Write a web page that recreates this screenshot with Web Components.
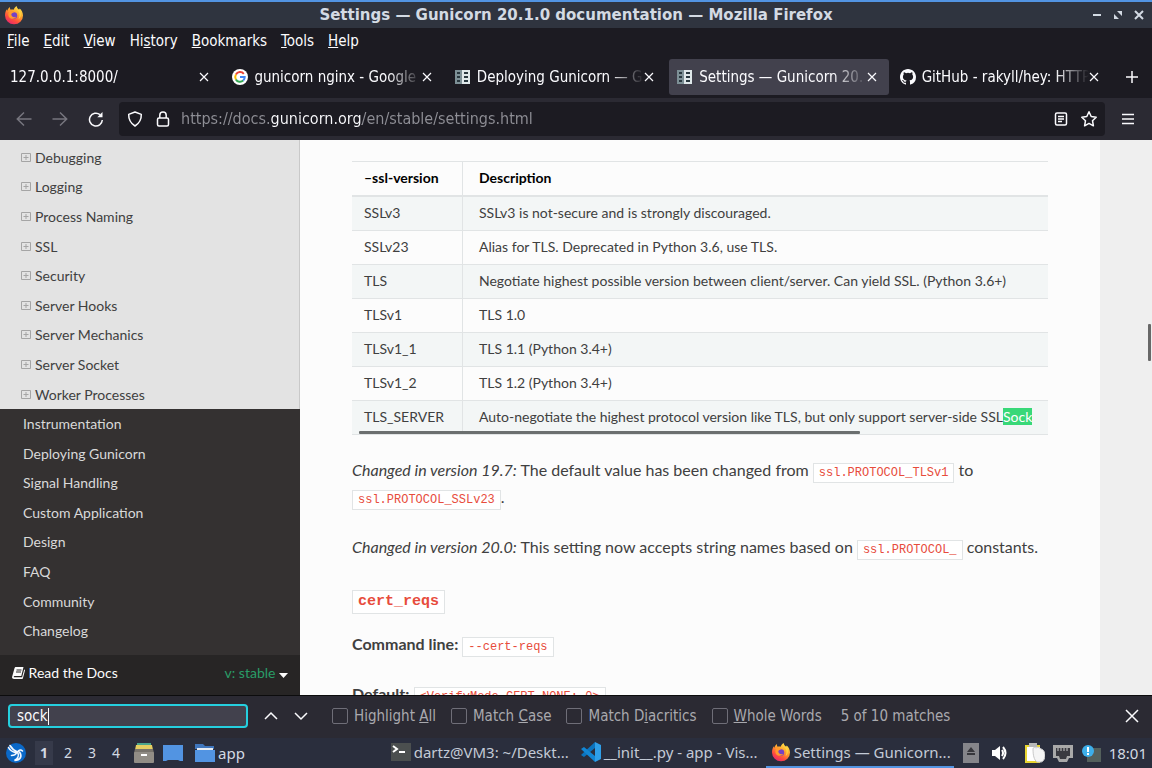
<!DOCTYPE html>
<html lang="en">

<head>
  <meta charset="UTF-8">
  <meta name="viewport" content="width=device-width, initial-scale=1.0">
  <title>Settings — Gunicorn 20.1.0 documentation</title>
  <style>
    html, body {
      height: 100%;
      margin: 0;
    }
    body {
      display: flex;
      flex-direction: column;
      overflow: hidden;
      background: #1c1b22;
      font: 15px/18px "DejaVu Sans Condensed", "DejaVu Sans", sans-serif;
    }
    main {
      flex: 1;
      min-height: 0;
      display: flex;
      background: #efefef;
    }
  </style>
</head>

<body>
  <template id="title-bar">
    <style>
      :host {
        display: flex;
        align-items: center;
        height: 26px;
        padding: 0 3px 0 4px;
        border-top: 2px solid #5294e2;
        background: #2f343f;
        color: #d3dae3;
      }
      h1 {
        flex: 1;
        margin: 0;
        padding-left: 42px;
        text-align: center;
        font: bold 15px/18px "DejaVu Sans", sans-serif;
      }
      button {
        width: 21px;
        height: 20px;
        padding: 0;
        border: 0;
        background: none;
        color: inherit;
      }
      svg { display: block; margin: auto; }
    </style>
    <fire-fox></fire-fox>
    <h1><slot></slot></h1>
    <button aria-label="Minimise"><svg width="10" height="10"><path d="M1 5h8" stroke="currentColor" stroke-width="2"/></svg></button>
    <button aria-label="Restore"><svg width="10" height="10"><path d="M4 1h5v5zM1 4v5h5z" fill="currentColor"/></svg></button>
    <button aria-label="Close"><svg width="10" height="10"><path d="M1 1l8 8M9 1l-8 8" stroke="currentColor" stroke-width="2"/></svg></button>
  </template>

  <template id="fire-fox">
    <style>
      :host { display: block; width: 20px; height: 20px; flex: none; }
      svg { display: block; }
    </style>
    <svg width="20" height="20" viewBox="0 0 20 20">
      <defs>
        <linearGradient id="f" x1="0.8" y1="0" x2="0.2" y2="1">
          <stop offset="0" stop-color="#fff04e"/>
          <stop offset="0.4" stop-color="#ffa02c"/>
          <stop offset="0.7" stop-color="#ff4f3c"/>
          <stop offset="1" stop-color="#e32176"/>
        </linearGradient>
      </defs>
      <path d="M12.6 1c.3 2 1.400 2.600 2.400 3.600.5-.2.6-.6.6-1.200 2 1.500 3.400 4.200 3.400 7A9 8.800 0 0 1 1 10.600C1 8 1.700 5.700 2.800 4.200c0 .8.200 1.200.5 1.600C3.800 4 4.800 2.700 6 2c-.2 1 0 2 .6 2.700 1-.4 2.200-.4 3 0C10.400 3 11.200 1.700 12.600 1z" fill="url(#f)"/>
      <circle cx="10" cy="10.500" r="3.200" fill="#7542c5"/>
      <path d="M3.500 6c2-1.200 4.500-.8 6.800.8-1 1.600-3 1-3 2.700 0 2.200 2.700 3.200 5 2.300-1.500 2.700-6.200 2.600-7.600-.4C4 9.500 4.400 7.800 5.200 7z" fill="#ff9a2e"/>
      <path d="M12.500 4.500c3 2 4.200 5.500 2 9.500 2.500-1.500 3.500-5.500 1-8.800z" fill="#ffd53f"/>
    </svg>
  </template>

  <template id="menu-bar">
    <style>
      :host {
        display: flex;
        gap: 14px;
        height: 26px;
        align-items: center;
        padding: 0 7px;
        background: #1c1b22;
        color: #fbfbfe;
      }
      ::slotted(button) {
        padding: 0;
        border: 0;
        background: none;
        color: inherit;
        font: inherit;
      }
    </style>
    <slot></slot>
  </template>

  <template id="tab-strip">
    <style>
      :host {
        display: flex;
        gap: 3px;
        align-items: center;
        height: 42px;
        padding: 2px 8px 0 2px;
        background: #1c1b22;
        color: #fbfbfe;
      }
      button {
        width: 24px;
        height: 24px;
        margin: 0 0 0 6px;
        padding: 0;
        border: 0;
        background: none;
        color: inherit;
      }
      svg { display: block; margin: auto; }
    </style>
    <slot></slot>
    <button aria-label="New tab"><svg width="14" height="14"><path d="M7 1v12M1 7h12" stroke="currentColor" stroke-width="1.500"/></svg></button>
  </template>

  <template id="browser-tab">
    <style>
      :host {
        display: flex;
        flex: 1;
        min-width: 0;
        gap: 6px;
        align-items: center;
        box-sizing: border-box;
        height: 36px;
        padding: 0 7px 0 8px;
        border-radius: 3px;
      }
      :host([selected]) { background: #42414d; }
      ::slotted(svg) { flex: none; }
      .label {
        flex: 1;
        overflow: hidden;
        margin-right: -11px;
        white-space: nowrap;
        -webkit-mask-image: linear-gradient(to left, transparent, #000 34px);
        mask-image: linear-gradient(to left, transparent, #000 34px);
      }
      button {
        width: 20px;
        height: 20px;
        padding: 0;
        border: 0;
        background: none;
        color: inherit;
      }
      button svg { display: block; margin: auto; }
    </style>
    <slot name="icon"></slot>
    <span class="label"><slot></slot></span>
    <button aria-label="Close tab"><svg width="10" height="10"><path d="M1 1l8 8M9 1l-8 8" stroke="currentColor" stroke-width="1.200"/></svg></button>
  </template>

  <template id="nav-toolbar">
    <style>
      :host {
        display: flex;
        align-items: center;
        height: 42px;
        box-sizing: border-box;
        padding: 0 6px;
        background: #2b2a33;
        color: #fbfbfe;
      }
      button {
        flex: none;
        width: 36px;
        height: 32px;
        padding: 0;
        border: 0;
        background: none;
        color: inherit;
      }
      button:disabled { color: #77767f; }
      svg {
        display: block;
        margin: auto;
        fill: none;
        stroke: currentColor;
        stroke-width: 1.500;
      }
      .field {
        flex: 1;
        display: flex;
        align-items: center;
        height: 34px;
        margin: 0 5px;
        padding: 0 2px;
        border-radius: 4px;
        background: #1c1b22;
      }
      .field button { width: 28px; }
      input {
        flex: 1;
        min-width: 0;
        margin-left: 4px;
        padding: 0;
        border: 0;
        outline: 0;
        font: 16px/20px "DejaVu Sans Condensed", "DejaVu Sans", sans-serif;
        color: #8f8f96;
        /* host name brighter than the rest of the address */
        background: linear-gradient(90deg, #8f8f96 90px, #fbfbfe 90px 181px, #8f8f96 181px);
        -webkit-background-clip: text;
        background-clip: text;
        -webkit-text-fill-color: transparent;
      }
    </style>
    <button disabled aria-label="Back"><svg width="16" height="16"><path d="M15.500 8H1M8 1.500L1.300 8 8 14.500"/></svg></button>
    <button disabled aria-label="Forward"><svg width="16" height="16"><path d="M.5 8H15M8 1.500L14.700 8 8 14.500"/></svg></button>
    <button aria-label="Reload"><svg width="16" height="16"><path d="M14.300 9A6.400 6.400 0 1 1 12 3.700"/><path d="M14.500 1v5.200H9.300z" fill="currentColor" stroke="none"/></svg></button>
    <div class="field">
      <button aria-label="Tracking protection"><svg width="16" height="16"><path d="M8 1l6.300 2.400C14.500 9 12 12.500 8 15 4 12.500 1.500 9 1.700 3.400z" stroke-linejoin="round"/></svg></button>
      <button aria-label="Connection secure"><svg width="16" height="16"><rect x="2.500" y="7" width="11" height="8" rx="1.500"/><path d="M4.800 7V4.200a3.200 3.200 0 0 1 6.400 0V7"/></svg></button>
      <input id="url" aria-label="Address" value="https://docs.gunicorn.org/en/stable/settings.html">
      <button aria-label="Reader view"><svg width="14" height="16"><rect x="1.500" y="2" width="11" height="12" rx="1.500"/><path d="M4 5.500h6M4 8h6M4 10.500h4"/></svg></button>
      <button aria-label="Bookmark"><svg width="18" height="18"><path d="M9 1.800l2.200 4.700 5 .7-3.700 3.500.9 5.100L9 13.400l-4.400 2.400.9-5.100L1.800 7.200l5-.7z" stroke-linejoin="round"/></svg></button>
    </div>
    <button aria-label="Menu"><svg width="14" height="14"><path d="M1 2.500h12M1 7h12M1 11.500h12"/></svg></button>
  </template>

  <template id="docs-nav">
    <style>
      :host {
        flex: none;
        display: flex;
        flex-direction: column;
        width: 300px;
        background: #343131;
        color: #d9d9d9;
        font: 14px/18px Lato, sans-serif;
      }
      nav {
        flex: 1;
        min-height: 0;
        display: flex;
        flex-direction: column;
        padding-bottom: 9px;
      }
      .current {
        flex: 9;
        display: flex;
        flex-direction: column;
        padding-top: 3px;
        border-right: 1px solid #c9c9c9;
        background: #e3e3e3;
        color: #404040;
      }
      .rest {
        flex: 8;
        display: flex;
        flex-direction: column;
      }
      footer {
        display: flex;
        align-items: center;
        justify-content: space-between;
        height: 40px;
        box-sizing: border-box;
        padding: 0 12px 4px;
        background: #272525;
        color: #fcfcfc;
      }
      footer svg { vertical-align: -1px; }
      button {
        padding: 0;
        border: 0;
        background: none;
        color: #2a9d68;
        font: inherit;
      }
    </style>
    <nav aria-label="Documentation">
      <div class="current"><slot name="current"></slot></div>
      <div class="rest"><slot></slot></div>
    </nav>
    <footer>
      <span><svg width="13" height="12" viewBox="0 0 13 12"><path d="M4 0h7.500L9.300 9H2.500c-1 0-1 1.300 0 1.300h7.600L12.200 2.500c.8.300.9.700.7 1.300L11 11c-.2.700-.5 1-1.200 1H2C.5 12-.3 10.800.2 9.500L2.500 1.200C2.800.4 3.200 0 4 0z" fill="currentColor"/><path d="M4.500 3h5M4 5h5" stroke="#272525"/></svg> Read the Docs</span>
      <button>v: stable <svg width="9" height="7"><path d="M0 1h9L4.500 6z" fill="#fcfcfc"/></svg></button>
    </footer>
  </template>

  <template id="nav-item">
    <style>
      :host { flex: 1; display: flex; }
      a {
        flex: 1;
        display: flex;
        gap: 4px;
        align-items: center;
        padding: 0 23px;
        color: inherit;
        text-decoration: none;
      }
      svg { display: none; }
      :host([slot="current"]) a { padding-left: 21px; }
      :host([slot="current"]) svg { display: block; }
    </style>
    <a href="#"><svg width="10" height="10" fill="none" stroke="#a5a5a5"><path d="M.5.500h9v8h-9zM2.500 4.500h5M5 2v5"/></svg><slot></slot></a>
  </template>

  <template id="code-lit">
    <style>
      :host {
        display: inline-block;
        padding: 2px 5px;
        border: 1px solid #e1e4e5;
        background: #fff;
        color: #e74c3c;
        font: 12px/14px "Liberation Mono", monospace;
        white-space: nowrap;
      }
      :host([large]) {
        font: bold 15px/18px "Liberation Mono", monospace;
      }
    </style>
    <slot></slot>
  </template>

  <template id="docs-page">
    <style>
      :host {
        flex: 0 1 800px;
        min-width: 0;
        overflow: hidden;
        box-sizing: border-box;
        padding: 21px 52px 0;
        background: #fcfcfc;
        color: #404040;
        font: 16px/27px Lato, sans-serif;
      }
      .scroller {
        position: relative;
        overflow: hidden;
        margin-bottom: 21px;
      }
      .thumb {
        position: absolute;
        left: 7px;
        bottom: 1px;
        width: 72%;
        height: 3px;
        border-radius: 1px;
        background: #6b6f6f;
      }
      table {
        width: 100%;
        border-collapse: separate;
        border-spacing: 0;
        border-top: 1px solid #e1e4e5;
        font-size: 14px;
        line-height: 17px;
        white-space: nowrap;
      }
      th, td {
        padding: 7px 16px 9px;
        border-bottom: 1px solid #e1e4e5;
        text-align: left;
      }
      th {
        border-bottom-width: 2px;
        color: #000;
      }
      tr > :first-child {
        width: 82px;
        padding-left: 12px;
        border-right: 1px solid #e1e4e5;
      }
      tr > :last-child { padding-right: 0; }
      tbody tr:nth-child(odd) { background: #f3f6f6; }
      mark {
        background: #38d878;
        color: #fff;
      }
      p { margin: 0 0 23px; }
      h3 { margin: 25px 0 16px; line-height: 27px; }
    </style>
    <div class="scroller">
      <table>
        <thead>
          <tr><th scope="col">–ssl-version</th><th scope="col">Description</th></tr>
        </thead>
        <tbody>
          <tr><td>SSLv3</td><td>SSLv3 is not-secure and is strongly discouraged.</td></tr>
          <tr><td>SSLv23</td><td>Alias for TLS. Deprecated in Python 3.6, use TLS.</td></tr>
          <tr><td>TLS</td><td>Negotiate highest possible version between client/server. Can yield SSL. (Python 3.6+)</td></tr>
          <tr><td>TLSv1</td><td>TLS 1.0</td></tr>
          <tr><td>TLSv1_1</td><td>TLS 1.1 (Python 3.4+)</td></tr>
          <tr><td>TLSv1_2</td><td>TLS 1.2 (Python 3.4+)</td></tr>
          <tr><td>TLS_SERVER</td><td>Auto-negotiate the highest protocol version like TLS, but only support server-side SSL<mark>Sock</mark></td></tr>
        </tbody>
      </table>
      <div class="thumb"></div>
    </div>
    <p><em>Changed in version 19.7:</em> The default value has been changed from <code-lit>ssl.PROTOCOL_TLSv1</code-lit> to <code-lit>ssl.PROTOCOL_SSLv23</code-lit>.</p>
    <p><em>Changed in version 20.0:</em> This setting now accepts string names based on <code-lit>ssl.PROTOCOL_</code-lit> constants.</p>
    <h3><code-lit large>cert_reqs</code-lit></h3>
    <p><strong>Command line:</strong> <code-lit>--cert-reqs</code-lit></p>
    <p><strong>Default:</strong> <code-lit>&lt;VerifyMode.CERT_NONE: 0&gt;</code-lit></p>
  </template>

  <template id="page-scrollbar">
    <style>
      :host {
        flex: 1;
        display: flex;
        justify-content: flex-end;
        padding: 184px 1px 0 0;
      }
      i { width: 3px; height: 37px; border-radius: 1px; background: #686868; }
    </style>
    <i></i>
  </template>

  <template id="find-bar">
    <style>
      :host {
        display: flex;
        align-items: center;
        height: 40px;
        padding: 0 8px 2px;
        border-top: 1px solid #0c0c0d;
        background: #2b2a33;
        color: #fbfbfe;
      }
      .box {
        display: flex;
        align-items: center;
        box-sizing: border-box;
        width: 240px;
        height: 24px;
        padding: 0 7px;
        border: 2px solid #25cfdf;
        border-radius: 4px;
        background: #42414d;
      }
      .box input {
        field-sizing: content;
        max-width: 100%;
        padding: 0;
        border: 0;
        outline: 0;
        background: none;
        color: inherit;
        font: inherit;
      }
      .caret { width: 1px; height: 17px; background: #fbfbfe; }
      button {
        width: 30px;
        height: 24px;
        padding: 0;
        border: 0;
        background: none;
        color: inherit;
      }
      .box + button { margin-left: 8px; }
      .close { width: 24px; margin-left: auto; }
      svg {
        display: block;
        margin: auto;
        fill: none;
        stroke: currentColor;
        stroke-width: 1.500;
      }
      .options { display: flex; gap: 15px; margin-left: 16px; color: #a9a9ae; }
      .status { margin-left: 19px; color: #a9a9ae; }
    </style>
    <div class="box">
      <input id="find" aria-label="Find in page" value="sock"><i class="caret"></i>
    </div>
    <button aria-label="Previous match"><svg width="14" height="10"><path d="M1 8l6-6 6 6"/></svg></button>
    <button aria-label="Next match"><svg width="14" height="10"><path d="M1 2l6 6 6-6"/></svg></button>
    <div class="options"><slot></slot></div>
    <span class="status"><slot name="status"></slot></span>
    <button class="close" aria-label="Close find bar"><svg width="14" height="14"><path d="M1 1l12 12M13 1L1 13"/></svg></button>
  </template>

  <template id="find-option">
    <style>
      :host { display: block; }
      label { display: flex; gap: 6px; align-items: center; white-space: pre; }
      input {
        appearance: none;
        box-sizing: border-box;
        width: 16px;
        height: 16px;
        margin: 0;
        border: 1px solid #6f6e78;
        border-radius: 2px;
      }
    </style>
    <label><input type="checkbox"><span><slot></slot></span></label>
  </template>

  <template id="task-bar">
    <style>
      :host {
        display: flex;
        align-items: center;
        height: 30px;
        padding: 0 5px;
        background: #2a2e3d;
        color: #d3dae3;
        font: 15px/20px "Noto Sans", sans-serif;
      }
      .desks { display: flex; gap: 6px; margin: 0 9px 0 8px; }
      button {
        padding: 0;
        border: 0;
        background: none;
        color: inherit;
        font: inherit;
      }
      .desks button { width: 18px; height: 24px; font-size: 14px; }
      .desks .on { background: #363a4a; font-weight: bold; }
      .quick { display: flex; gap: 9px; align-items: center; }
      .quick button { display: flex; gap: 3px; align-items: center; }
      .quick button:last-child { margin-left: 3px; }
      .tasks { flex: 1; display: flex; gap: 2px; justify-content: flex-end; margin: 0 9px 0 16px; }
      .tray { display: flex; align-items: center; gap: 8px; }
      .volume { margin: 0 8px 0 4px; }
      svg { display: block; flex: none; }
    </style>
    <button aria-label="Start"><svg width="22" height="22"><circle cx="11" cy="11" r="10" fill="#0a68c8"/><path d="M3.500 5.500c2 4 4.500 4.500 8 5.500-1 2-3 2.500-5 2.500M5 3.500c2 3.500 4 5 7.500 6.500 1.500-2.500 3.500-2.500 5-1M12.500 10c2 3.500.5 6.500-3 8.500 6-.5 8-4 5-8.500" fill="none" stroke="#f4f8ff" stroke-width="1.600" stroke-linecap="round"/></svg></button>
    <div class="desks">
      <button class="on">1</button><button>2</button><button>3</button><button>4</button>
    </div>
    <div class="quick">
      <button aria-label="Files"><svg width="20" height="20"><path d="M3 0h14v3H3z" fill="#4ba58c"/><path d="M2 2h16l1 5H1z" fill="#e5cf62"/><path d="M1 6h18l1 4H0z" fill="#77736c"/><rect y="9" width="20" height="11" rx="1" fill="#918d86"/><rect x="7" y="11" width="6" height="2" fill="#fff"/></svg></button>
      <button aria-label="Show desktop"><svg width="20" height="16"><path d="M0 0h20v16h-3l-2-1H5l-2 1H0z" fill="#5294e2"/></svg></button>
      <button><svg width="20" height="18"><path d="M0 0h8l2 2h9v3H0z" fill="#3f76bd"/><path d="M2 4h16v3H2z" fill="#e8edf4"/><path d="M0 6h20v12H0z" fill="#5294e2"/></svg>app</button>
    </div>
    <div class="tasks"><slot></slot></div>
    <div class="tray">
      <svg width="16" height="20"><path d="M0 0h16v20H0z" fill="#85858a"/><path d="M8 4l4 5H4zM4 10h8v2H4z" fill="#37373c"/></svg>
      <svg class="volume" width="18" height="18"><path d="M1 6h3l5-4v14l-5-4H1z" fill="#fff"/><path d="M11 6q2 3 0 6M12 3q5 6 0 12" fill="none" stroke="#fff" stroke-width="2"/></svg>
      <svg width="20" height="20"><path d="M0 2h15v18H0z" fill="#e8d532"/><path d="M2 4h13v14H2z" fill="#fff"/><path d="M4 0h8v4H4z" fill="#b8b8b8"/><path d="M8 6c0-2 2-2 3-1l2-1 3 2c2 0 4 3 4 6 0 4-2 7-4 7h-4c-3-2-4-7-4-13z" fill="#f5f5f5" stroke="#c9c9c9"/></svg>
      <svg width="20" height="18"><path d="M0 1h20v13h-4l-2 4H6l-2-4H0z" fill="#a9a9a9"/><path d="M3 4h14v8h-3l-1 3H7l-1-3H3z" fill="#3a3a40"/><path d="M5 4v3M8 4v3M11 4v3M14 4v3" stroke="#c9c9c9"/></svg>
      <svg width="20" height="18"><path d="M6 4h14v14H6z" fill="#54605c"/><circle cx="7" cy="7" r="6" fill="#3daee9"/><path d="M7 3v5M7 9v2" stroke="#fff" stroke-width="2"/></svg>
      <time>18:01</time>
    </div>
  </template>

  <template id="task-item">
    <style>
      :host {
        flex: 1;
        max-width: 188px;
        display: flex;
        min-width: 0;
      }
      button {
        flex: 1;
        min-width: 0;
        display: flex;
        gap: 3px;
        align-items: center;
        height: 30px;
        padding: 0 0 0 5px;
        border: 0;
        border-bottom: 2px solid transparent;
        background: none;
        color: #c3cad6;
        font: inherit;
        white-space: nowrap;
      }
      :host([active]) button { border-color: #5294e2; }
    </style>
    <button><slot name="icon"></slot><slot></slot></button>
  </template>

  <title-bar>Settings — Gunicorn 20.1.0 documentation — Mozilla Firefox</title-bar>

  <menu-bar>
    <button><u>F</u>ile</button>
    <button><u>E</u>dit</button>
    <button><u>V</u>iew</button>
    <button>Hi<u>s</u>tory</button>
    <button><u>B</u>ookmarks</button>
    <button><u>T</u>ools</button>
    <button><u>H</u>elp</button>
  </menu-bar>

  <tab-strip>
    <browser-tab>127.0.0.1:8000/</browser-tab>
    <browser-tab>
      <svg slot="icon" width="16" height="16" fill="none" stroke-width="2">
        <circle cx="8" cy="8" r="8" fill="#fff"/>
        <path d="M11.800 4.800A4.800 4.800 0 0 0 3.900 5.600" stroke="#ea4335"/>
        <path d="M3.900 5.600a4.800 4.800 0 0 0 0 4.800" stroke="#fbbc05"/>
        <path d="M3.900 10.400a4.800 4.800 0 0 0 7.300 1.200" stroke="#34a853"/>
        <path d="M11.200 11.600A4.800 4.800 0 0 0 12.700 8H8" stroke="#4285f4"/>
      </svg>gunicorn nginx - Google</browser-tab>
    <browser-tab>
      <svg slot="icon" width="16" height="16"><path d="M0 1h7v14H0z" fill="#7d9096"/><path d="M7 1h8v14H7z" fill="#dfe8ea"/><path d="M2 3h3v2H2zM2 7h3v2H2zM2 11h3v2H2zM9 3h4v2H9zM9 7h4v2H9zM9 11h4v2H9z" fill="#29383f"/></svg>Deploying Gunicorn — G</browser-tab>
    <browser-tab selected>
      <svg slot="icon" width="16" height="16"><path d="M0 1h7v14H0z" fill="#7d9096"/><path d="M7 1h8v14H7z" fill="#dfe8ea"/><path d="M2 3h3v2H2zM2 7h3v2H2zM2 11h3v2H2zM9 3h4v2H9zM9 7h4v2H9zM9 11h4v2H9z" fill="#29383f"/></svg>Settings — Gunicorn 20.</browser-tab>
    <browser-tab>
      <svg slot="icon" width="16" height="16"><path fill="#fbfbfe" d="M8 0C3.580 0 0 3.580 0 8c0 3.540 2.290 6.530 5.470 7.590.4.070.55-.17.55-.38 0-.19-.01-.82-.01-1.490-2.010.37-2.530-.49-2.690-.94-.09-.23-.48-.94-.82-1.130-.28-.15-.68-.52-.01-.53.63-.01 1.080.58 1.230.82.72 1.210 1.870.87 2.330.66.07-.52.28-.87.51-1.070-1.780-.2-3.640-.89-3.640-3.950 0-.87.31-1.590.82-2.150-.08-.2-.36-1.020.08-2.120 0 0 .67-.21 2.200.82a7.600 7.600 0 0 1 4 0c1.530-1.040 2.200-.82 2.200-.82.44 1.100.16 1.920.08 2.120.51.56.82 1.270.82 2.150 0 3.070-1.870 3.750-3.650 3.950.29.25.54.73.54 1.480 0 1.070-.01 1.930-.01 2.200 0 .21.15.46.55.38A8 8 0 0 0 16 8c0-4.420-3.580-8-8-8z"/></svg>GitHub - rakyll/hey: HTTP</browser-tab>
  </tab-strip>

  <nav-toolbar></nav-toolbar>

  <main>
    <docs-nav>
      <nav-item slot="current">Debugging</nav-item>
      <nav-item slot="current">Logging</nav-item>
      <nav-item slot="current">Process Naming</nav-item>
      <nav-item slot="current">SSL</nav-item>
      <nav-item slot="current">Security</nav-item>
      <nav-item slot="current">Server Hooks</nav-item>
      <nav-item slot="current">Server Mechanics</nav-item>
      <nav-item slot="current">Server Socket</nav-item>
      <nav-item slot="current">Worker Processes</nav-item>
      <nav-item>Instrumentation</nav-item>
      <nav-item>Deploying Gunicorn</nav-item>
      <nav-item>Signal Handling</nav-item>
      <nav-item>Custom Application</nav-item>
      <nav-item>Design</nav-item>
      <nav-item>FAQ</nav-item>
      <nav-item>Community</nav-item>
      <nav-item>Changelog</nav-item>
    </docs-nav>
    <docs-page></docs-page>
    <page-scrollbar></page-scrollbar>
  </main>

  <find-bar>
    <find-option>Highlight <u>A</u>ll</find-option>
    <find-option>Match <u>C</u>ase</find-option>
    <find-option>Match D<u>i</u>acritics</find-option>
    <find-option><u>W</u>hole Words</find-option>
    <span slot="status">5 of 10 matches</span>
  </find-bar>

  <task-bar>
    <task-item><svg slot="icon" width="20" height="18"><path d="M0 0h20v18H0z" fill="#4b4f4f"/><path d="M2 3l4 3-4 3M8 9h6" fill="none" stroke="#fff" stroke-width="2"/></svg>dartz@VM3: ~/Deskt...</task-item>
    <task-item><svg slot="icon" width="20" height="20"><path d="M14 0l6 3v14l-6 3z" fill="#2f9fe8"/><path d="M14 0v6L3 15l-3-2z" fill="#0b74bf"/><path d="M14 20v-6L3 5 0 7z" fill="#1286d4"/></svg>__init__.py - app - Vis...</task-item>
    <task-item active><fire-fox slot="icon"></fire-fox>Settings — Gunicorn...</task-item>
  </task-bar>

  <script>
    // one element per template, the id is the tag name
    document.querySelectorAll('template').forEach((template) => {
      customElements.define(template.id, class extends HTMLElement {
        constructor() {
          super()
          const shadow = this.attachShadow({ mode: 'open' })
          shadow.appendChild(template.content.cloneNode(true))
        }
      })
    })
  </script>
</body>

</html>
